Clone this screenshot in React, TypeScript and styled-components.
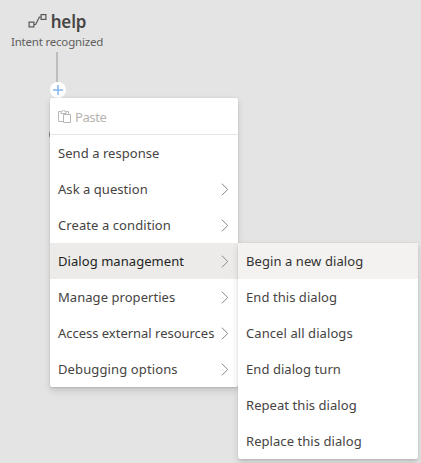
import React from "react";
import styled, { createGlobalStyle } from "styled-components";

const GlobalStyle = createGlobalStyle`
  * { box-sizing: border-box; }
  body {
    margin: 0;
    background: #e4e4e4;
    font-family: "Noto Sans", "Open Sans", sans-serif;
    overflow: hidden;
  }
`;

const Canvas = styled.main`
  position: relative;
  width: 421px;
  height: 463px;
  overflow: hidden;
  background: #e4e4e4;
`;

const Trigger = styled.header`
  width: 114px;
  padding-top: 11px;
  display: flex;
  flex-direction: column;
  align-items: center;
`;

const TriggerTitle = styled.h1`
  margin: 0;
  height: 21px;
  display: flex;
  align-items: center;
  gap: 4px;
  color: #484644;
  font-size: 17px;
  font-weight: 600;
  line-height: 21px;
  letter-spacing: -0.15px;
`;

const TriggerKind = styled.div`
  height: 20px;
  color: #605e5c;
  font-size: 11.5px;
  line-height: 19px;
  white-space: nowrap;
  letter-spacing: -0.2px;
`;

const Edge = styled.div`
  width: 2px;
  height: 30px;
  background: #bdbdbd;
`;

const AddButton = styled.button`
  width: 16px;
  height: 16px;
  padding: 0;
  display: grid;
  place-items: center;
  border: 0;
  border-radius: 50%;
  background: #fff;
  margin-left: 2px;
`;

const NextNode = styled.div`
  position: absolute;
  left: 49px;
  top: 129px;
  width: 10px;
  height: 11px;
  border-radius: 5px;
  background: #858585;
`;

const Menu = styled.ul<{ $left: number; $top: number; $width: number }>`
  position: absolute;
  left: ${(p) => p.$left}px;
  top: ${(p) => p.$top}px;
  width: ${(p) => p.$width}px;
  margin: 0;
  padding: 0;
  list-style: none;
  background: #fff;
  border-radius: 2px;
  box-shadow: 0 3.2px 7.2px rgba(0, 0, 0, 0.132), 0 0.6px 1.8px rgba(0, 0, 0, 0.108);
`;

const MenuItem = styled.li<{ $fill?: string; $color?: string }>`
  height: 36px;
  padding: 0 9px 0 8px;
  display: flex;
  align-items: center;
  justify-content: space-between;
  background: ${(p) => p.$fill ?? "transparent"};
  color: ${(p) => p.$color ?? "#454442"};
`;

const Label = styled.span<{ $tracking?: number }>`
  font-size: 13px;
  line-height: 20px;
  white-space: nowrap;
  letter-spacing: ${(p) => p.$tracking ?? 0}px;
`;

const PasteItem = styled.li`
  height: 37px;
  padding: 1px 8px 0;
  display: flex;
  align-items: center;
  gap: 4px;
  color: #b5b3b1;
  border-bottom: 1px solid #e4e3e2;
`;

const FlowIcon = () => (
  <svg width="19" height="16" viewBox="0 0 19 16" fill="none" stroke="#555" strokeWidth="1.2">
    <rect x="1.1" y="8.1" width="4.8" height="4.8" />
    <rect x="13.1" y="0.6" width="4.8" height="4.8" />
    <path d="M6 10.5h1.6L11.4 3H13" />
  </svg>
);

const PlusIcon = () => (
  <svg width="10" height="10" viewBox="0 0 10 10" stroke="#86b4ee" strokeWidth="1.5">
    <path d="M5 0v10M0 5h10" />
  </svg>
);

const PasteIcon = () => (
  <svg width="13" height="14" viewBox="0 0 13 14" fill="none" stroke="#bab8b6">
    <path d="M5 11.5H.5v-10h2.2M8.3 1.5h2.2V4M3 3.5v-2h1.2C4.2-.2 6.8-.2 6.8 1.5H8v2zM5.5 4.5h7v8h-7z" />
  </svg>
);

const Chevron = () => (
  <svg width="8" height="13" viewBox="0 0 8 13" fill="none" stroke="#8a8886">
    <path d="M.8.7l6 5.8-6 5.8" />
  </svg>
);

const groups = [
  { name: "Send a response", leaf: true, tracking: 0.05 },
  { name: "Ask a question", tracking: 0.05 },
  { name: "Create a condition", tracking: 0.08 },
  { name: "Dialog management", open: true, tracking: 0.06 },
  { name: "Manage properties", tracking: 0.05 },
  { name: "Access external resources", tracking: -0.02 },
  { name: "Debugging options", tracking: 0.12 },
];

const dialogActions = [
  { name: "Begin a new dialog", hovered: true, tracking: 0.08 },
  { name: "End this dialog", tracking: 0.06 },
  { name: "Cancel all dialogs", tracking: 0.08 },
  { name: "End dialog turn", tracking: 0.06 },
  { name: "Repeat this dialog", tracking: 0.06 },
  { name: "Replace this dialog", tracking: 0.06 },
];

export default function App() {
  return (
    <Canvas>
      <GlobalStyle />
      <Trigger>
        <TriggerTitle>
          <FlowIcon />
          help
        </TriggerTitle>
        <TriggerKind>Intent recognized</TriggerKind>
        <Edge />
        <AddButton aria-label="Add">
          <PlusIcon />
        </AddButton>
      </Trigger>
      <NextNode />
      <Menu $left={50} $top={98} $width={188}>
        <PasteItem>
          <PasteIcon />
          <Label $tracking={-0.4}>Paste</Label>
        </PasteItem>
        {groups.map((g) => (
          <MenuItem key={g.name} $fill={g.open ? "#edebe9" : undefined} $color={g.open ? "#201f1e" : undefined}>
            <Label $tracking={g.tracking}>{g.name}</Label>
            {!g.leaf && <Chevron />}
          </MenuItem>
        ))}
      </Menu>
      <Menu $left={238} $top={243} $width={180}>
        {dialogActions.map((a) => (
          <MenuItem key={a.name} $fill={a.hovered ? "#f3f2f1" : undefined} $color={a.hovered ? "#323130" : undefined}>
            <Label $tracking={a.tracking}>{a.name}</Label>
          </MenuItem>
        ))}
      </Menu>
    </Canvas>
  );
}
